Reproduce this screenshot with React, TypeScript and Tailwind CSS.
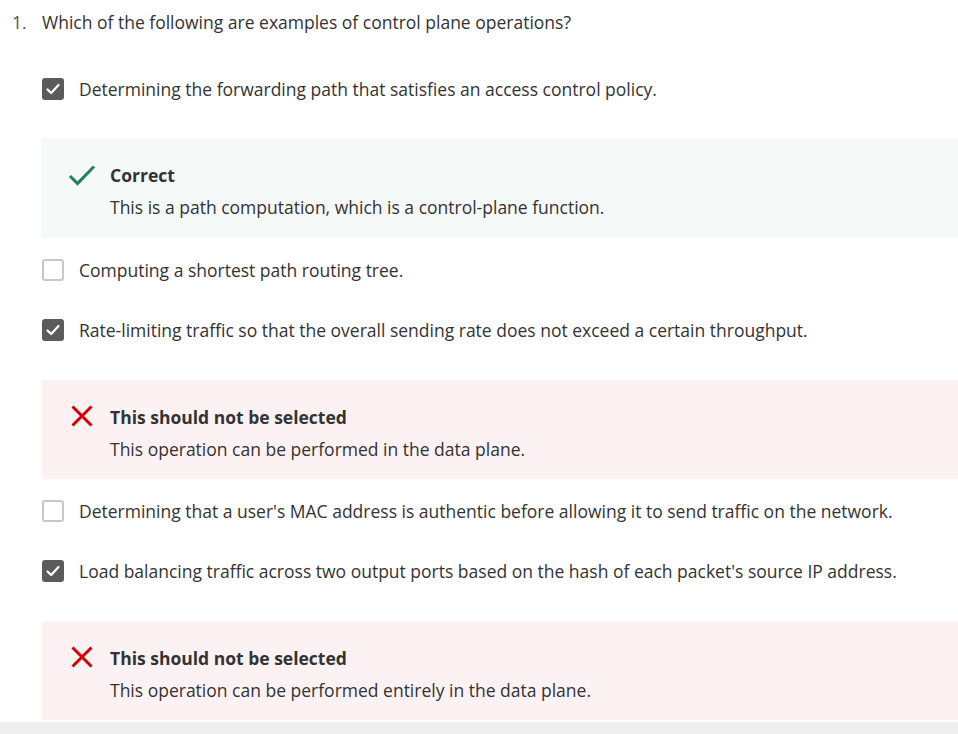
import React from "react";

type Feedback = { ok: boolean; title: string; text: string };
type Option = { label: string; checked: boolean; feedback?: Feedback };

const options: Option[] = [
  {
    label: "Determining the forwarding path that satisfies an access control policy.",
    checked: true,
    feedback: { ok: true, title: "Correct", text: "This is a path computation, which is a control-plane function." },
  },
  { label: "Computing a shortest path routing tree.", checked: false },
  {
    label: "Rate-limiting traffic so that the overall sending rate does not exceed a certain throughput.",
    checked: true,
    feedback: { ok: false, title: "This should not be selected", text: "This operation can be performed in the data plane." },
  },
  {
    label: "Determining that a user's MAC address is authentic before allowing it to send traffic on the network.",
    checked: false,
  },
  {
    label: "Load balancing traffic across two output ports based on the hash of each packet's source IP address.",
    checked: true,
    feedback: { ok: false, title: "This should not be selected", text: "This operation can be performed entirely in the data plane." },
  },
];

const Checkbox = ({ checked }: { checked: boolean }) =>
  checked ? (
    <span className="w-[22px] h-[22px] rounded-[3px] bg-[#5b5b5b] flex items-center justify-center shrink-0">
      <svg width="16" height="16" viewBox="0 0 16 16" fill="none">
        <path d="M2.5 8.5 L6.2 12 L13.5 4" stroke="white" strokeWidth="2.2" strokeLinecap="round" strokeLinejoin="round" />
      </svg>
    </span>
  ) : (
    <span className="w-[22px] h-[22px] rounded-[3px] border-2 border-[#c8c8c8] bg-white shrink-0" />
  );

const FeedbackBox = ({ fb }: { fb: Feedback }) => (
  <div
    className={`ml-[42px] flex pt-[25px] ${
      fb.ok ? "mt-[37px] pb-[19px] bg-[#f5f9f8]" : "mt-[38px] pb-[18px] bg-[#fcf2f3]"
    }`}
  >
    <div className="w-[68px] flex justify-center pl-[14px]">
      {fb.ok ? (
        <svg width="30" height="24" viewBox="0 0 30 24" fill="none" className="mt-[1px]">
          <path d="M2 12 L9.5 19.5 L26 2.5" stroke="#1f8354" strokeWidth="3" />
        </svg>
      ) : (
        <svg width="24" height="24" viewBox="0 0 24 24" fill="none" className="-ml-[2px] mt-[-1px]">
          <path d="M2.5 2.5 L21.5 21.5 M21.5 2.5 L2.5 21.5" stroke="#d30001" strokeWidth="3" />
        </svg>
      )}
    </div>
    <div className="flex flex-col gap-2">
      <div className="text-[17.5px] leading-6 font-bold text-[#333]">{fb.title}</div>
      <div className="text-[17.5px] leading-6 text-[#333]">{fb.text}</div>
    </div>
  </div>
);

export default function App() {
  return (
    <div className="min-h-screen bg-white flex flex-col" style={{ fontFamily: '"Open Sans", "Noto Sans", sans-serif' }}>
      <div className="flex pt-[10px] text-[17.5px] leading-6 text-[#333]">
        <span className="w-[42px] pl-[12px] text-[#555]">1.</span>
        <span>Which of the following are examples of control plane operations?</span>
      </div>
      <div className="flex flex-col">
        {options.map((o, i) => {
          const prev = options[i - 1];
          const mt = i === 0 ? "mt-[43px]" : prev.feedback ? "mt-[20px]" : "mt-[36px]";
          return (
            <div key={i} className="flex flex-col">
              <label className={`${mt} ml-[42px] flex items-center gap-[15px] h-6 text-[17.5px] leading-6 text-[#333]`}>
                <Checkbox checked={o.checked} />
                <span>{o.label}</span>
              </label>
              {o.feedback && <FeedbackBox fb={o.feedback} />}
            </div>
          );
        })}
      </div>
      <div className="mt-[2px] flex-1 min-h-[12px] bg-[#eeeeee]" />
    </div>
  );
}
